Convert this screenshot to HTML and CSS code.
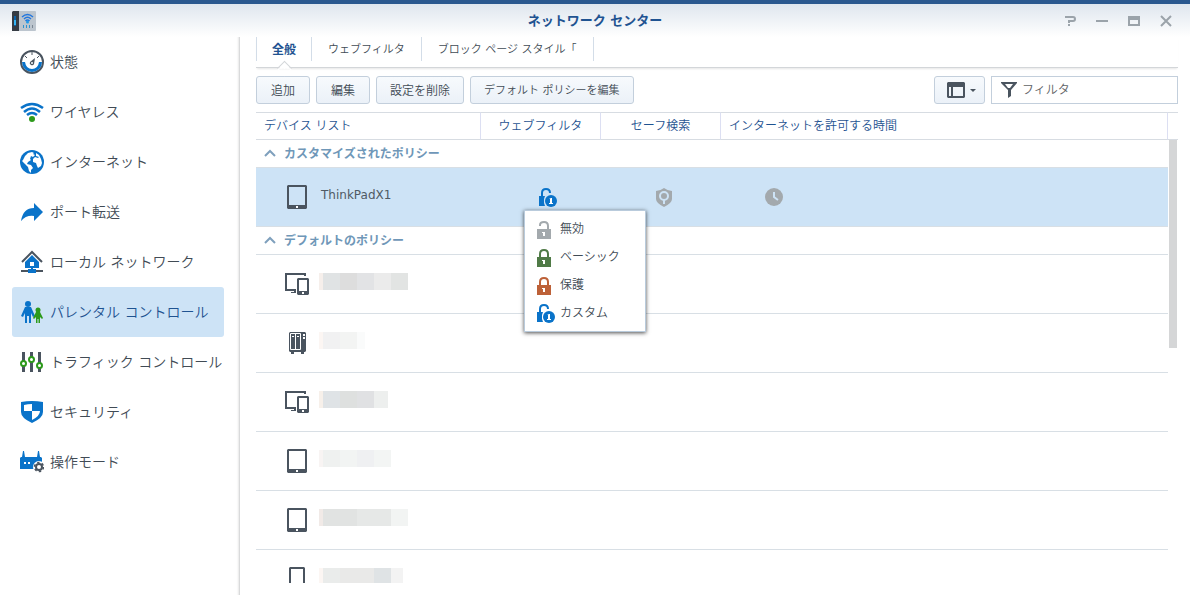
FILE: index.html
```html
<!DOCTYPE html>
<html lang="ja">
<head>
  <meta charset="UTF-8">
  <meta name="viewport" content="width=device-width, initial-scale=1.0">
  <title>ネットワーク センター</title>
  <link rel="stylesheet" href="styles.css">
</head>
<body>

  <!-- Shared icons -->
  <svg class="sprite" aria-hidden="true">
    <symbol id="tablet" viewBox="0 0 26 26">
      <path fill="#4a545f" fill-rule="evenodd" d="M4 1h18l1 1v22l-1 1H4l-1-1V2zM5 3v18h16V3z"/>
      <path fill="#fff" d="M12 22h2v2h-2z"/>
    </symbol>
    <symbol id="devices" viewBox="0 0 26 26">
      <path fill="#4a545f" d="M1 2h21v3h-2V4H3v14h9v4H7v-1h3v-1H1z"/>
      <path fill="#4a545f" fill-rule="evenodd" d="M14 7h10l1 1v15l-1 1H14l-1-1V8zM15 9v11h8V9z"/>
      <path fill="#fff" d="M18 21h2v2h-2z"/>
    </symbol>
    <symbol id="nas" viewBox="0 0 26 26">
      <path fill="#4a545f" d="M6 2h15l1 1v18l-1 1h-1v2h-3v-2h-7v2H7v-2H6l-1-1V3z"/>
      <path fill="none" stroke="#fff" d="M6.500 3.500h10v16h-10zM11.500 3.500v16"/>
      <path fill="#fff" d="M8 6h2v1H8zM13 6h2v1h-2zM19 4h2v2h-2zM19 7h2v2h-2z"/>
    </symbol>
    <symbol id="lock-open" viewBox="0 0 20 20">
      <path fill="none" stroke="currentColor" stroke-width="2" d="M4 7V6Q4 3 8 3t4 4v4"/>
      <path fill="currentColor" d="M1 10h14v10H1z"/>
      <path fill="#fff" d="M6 13h3v4H7v-3H6z"/>
    </symbol>
    <symbol id="lock-closed" viewBox="0 0 20 20">
      <path fill="none" stroke="currentColor" stroke-width="2" d="M4 11V7Q4 3 8 3t4 4v4"/>
      <path fill="currentColor" d="M1 10h14v10H1z"/>
      <path fill="#fff" d="M6 13h3v4H7v-3H6z"/>
    </symbol>
    <symbol id="lock-custom" viewBox="0 0 20 20">
      <path fill="none" stroke="currentColor" stroke-width="2" d="M4 10V6Q4 2 8 2t4 4"/>
      <path fill="currentColor" d="M1 9h6l-1 3v4l1 3H1z"/>
      <circle cx="13" cy="14" r="6" fill="currentColor"/>
      <path fill="#fff" d="M11 12l2-1h1v5h1v1h-4v-1h1v-4h-1z"/>
    </symbol>
    <symbol id="chevron" viewBox="0 0 12 8">
      <path fill="none" stroke="#7fa0bd" stroke-width="2" d="M1 7l5-5 5 5"/>
    </symbol>
  </svg>

  <!-- Title bar -->
  <header class="titlebar">
    <svg class="app-icon" viewBox="0 0 24 20" aria-hidden="true">
      <rect x="1" width="23" height="20" rx="1" fill="#bcc5ce"/>
      <path fill="#363c44" d="M0 1l1-1h6v20H0z"/>
      <path fill="#0b62a8" d="M2 5h2v10H2z"/>
      <path fill="#35b5f4" d="M2 9h2v5H2z"/>
      <g fill="none" stroke="#2377de" stroke-width="1.500">
        <path d="M10 6q5.500-5 11 0M12 8q3.500-3.500 7 0M13.500 10q2-2 4 0"/>
      </g>
      <circle cx="15.500" cy="11" r="1.500" fill="#1f9be8"/>
      <path fill="#2f93cf" d="M11 14h1v3h-1zM14 14h1v3h-1zM17 14h1v3h-1z"/>
      <path fill="#7a8794" d="M20 14h1v3h-1z"/>
    </svg>
    <h1>ネットワーク センター</h1>
    <div class="window-buttons">
      <button type="button" aria-label="ヘルプ"><svg viewBox="0 0 12 12"><path fill="none" stroke="#9ba3aa" stroke-width="2" d="M1 2h8q2 0 2 2t-2 2H5v2M4 10h2"/></svg></button>
      <button type="button" aria-label="最小化"><svg viewBox="0 0 12 12"><path fill="#9ba3aa" d="M0 5h12v2H0z"/></svg></button>
      <button type="button" aria-label="最大化"><svg viewBox="0 0 12 12"><path fill="#9ba3aa" fill-rule="evenodd" d="M0 1h12v10H0zM2 5v4h8V5z"/></svg></button>
      <button type="button" aria-label="閉じる"><svg viewBox="0 0 12 12"><path fill="none" stroke="#9ba3aa" stroke-width="2" d="M1 1l10 10M11 1L1 11"/></svg></button>
    </div>
  </header>

  <div class="window">

    <!-- Sidebar -->
    <nav class="sidebar">
      <a href="#status">
        <svg viewBox="0 0 24 24"><circle cx="12" cy="12" r="11" fill="#fff" stroke="#4a545f" stroke-width="2"/><path fill="#0a73c9" d="M2 12h3q1 7 7 7t7-7h3a10 10 0 0 1-20 0z"/><path stroke="#4a545f" d="M12 2v3M5 6l2 2M19 6l-2 2"/><path fill="#4a545f" d="M15 8l-1 6a2 2 0 1 1-4-2z"/><circle cx="12" cy="13" r="1" fill="#fff"/></svg>
        状態
      </a>
      <a href="#wireless">
        <svg viewBox="0 0 24 24"><g fill="none" stroke="#0a73c9" stroke-width="2.500"><path d="M1 8q11-8 22 0M4 12q8-7 16 0M7 15q5-4 10 0"/></g><circle cx="12" cy="19" r="3" fill="#2d9a1b"/></svg>
        ワイヤレス
      </a>
      <a href="#internet">
        <svg viewBox="0 0 24 24"><circle cx="12" cy="12" r="12" fill="#0a73c9"/><path fill="#fff" d="M5 6l3-3 4-1 2 1-1 1 2 1-2 2-2-1-1 3 1 1-3 2-1 2 4 1 2 3-2 2v3l-2-2-1-4-3-3-3-3 1-1zM16 3l3 2 2 4 1 4-1 3-3 2-1-2-1-3-3-1v-3l2-2 3 1 1-1-3-1z"/></svg>
        インターネット
      </a>
      <a href="#port">
        <svg viewBox="0 0 24 24"><path fill="#0a73c9" d="M1 21Q3 8 14 8V3l9 9-9 9v-5Q6 15 1 21z"/></svg>
        ポート転送
      </a>
      <a href="#lan">
        <svg viewBox="0 0 24 24"><path fill="none" stroke="#4a545f" stroke-width="2" d="M2 12L12 2l10 10"/><path fill="#0a73c9" fill-rule="evenodd" d="M12 5l7 7v6h-6v1h3v4H8v-4h3v-1H5v-6zM10 12v4h4v-4z"/><path fill="#4a545f" d="M1 20h7v2H1zM16 20h7v2h-7z"/></svg>
        ローカル ネットワーク
      </a>
      <a href="#parental" class="active">
        <svg viewBox="0 0 24 24"><circle cx="8" cy="4" r="3" fill="#0a73c9"/><path fill="#0a73c9" d="M5 7h6l4 9-2 1-2-4v10H9v-7H7v7H5V13l-2 4-2-1z"/><circle cx="18" cy="10" r="2.500" fill="#2d9a1b"/><path fill="#2d9a1b" d="M16 12h4l3 6-1 1-2-2v6h-1.500v-4h-1v4H16v-6l-2 2-1-1z"/></svg>
        パレンタル コントロール
      </a>
      <a href="#traffic">
        <svg viewBox="0 0 24 24"><path stroke="#4a545f" stroke-width="3" d="M3.500 2v20M11.500 2v20M19.500 2v20"/><g fill="#fff" stroke="#2d9a1b" stroke-width="2"><circle cx="3.500" cy="13.500" r="2.500"/><circle cx="11.500" cy="9.500" r="2.500"/><circle cx="19.500" cy="15.500" r="2.500"/></g></svg>
        トラフィック コントロール
      </a>
      <a href="#security">
        <svg viewBox="0 0 24 24"><path fill="#0a73c9" d="M1 2q11-2 22 0v10q0 6-11 11Q1 18 1 12z"/><path fill="#fff" d="M12 4v7H4V5q4-1 8-1zM12 11h8q0 5-8 9z"/></svg>
        セキュリティ
      </a>
      <a href="#mode">
        <svg viewBox="0 0 24 24"><path fill="#0a73c9" d="M3 1h1l1 6h12l1-6h1l1 6h1l1 1v11H0V8l1-1h1z"/><path fill="#fff" d="M4 12h2v2H4zM8 12h2v2H8z"/><circle cx="19" cy="17" r="6" fill="#fff"/><circle cx="19" cy="17" r="3" fill="none" stroke="#4a545f" stroke-width="2"/><circle cx="19" cy="17" r="4.500" fill="none" stroke="#4a545f" stroke-width="1.500" stroke-dasharray="2.400 2.300"/></svg>
        操作モード
      </a>
    </nav>

    <main>
      <!-- Tabs -->
      <div class="tabs" role="tablist">
        <button type="button" role="tab" class="active" aria-selected="true">全般</button>
        <button type="button" role="tab">ウェブフィルタ</button>
        <button type="button" role="tab">ブロック ページ スタイル「</button>
      </div>

      <!-- Toolbar -->
      <div class="toolbar">
        <button type="button" class="btn">追加</button>
        <button type="button" class="btn">編集</button>
        <button type="button" class="btn">設定を削除</button>
        <button type="button" class="btn btn-long">デフォルト ポリシーを編集</button>
        <button type="button" class="btn btn-view" aria-label="表示">
          <svg width="18" height="16" viewBox="0 0 18 16"><path fill="#4a545f" fill-rule="evenodd" d="M1 0h16l1 1v14l-1 1H1l-1-1V1zM2 5v9h2V5zM6 5v9h10V5z"/></svg>
          <svg width="6" height="3" viewBox="0 0 6 3"><path fill="#4a545f" d="M0 0h6L3 3z"/></svg>
        </button>
        <label class="filter">
          <svg width="16" height="16" viewBox="0 0 16 16"><path fill="#4a545f" fill-rule="evenodd" d="M0 0h16v1l-6 7v6l-3 2V8L0 1zM4 2l3 4h2l3-4z"/></svg>
          <input type="text" placeholder="フィルタ" aria-label="フィルタ">
        </label>
      </div>

      <!-- Device list -->
      <div class="list">
        <table>
          <colgroup><col class="col-device"><col class="col-icon"><col class="col-icon"><col><col class="col-scroll"></colgroup>
          <thead>
            <tr><th>デバイス リスト</th><th class="center">ウェブフィルタ</th><th class="center">セーフ検索</th><th>インターネットを許可する時間</th><th></th></tr>
          </thead>
          <tbody>
            <tr class="group"><th colspan="4"><svg><use href="#chevron"/></svg>カスタマイズされたポリシー</th><td></td></tr>
            <tr class="selected">
              <td><div class="device"><svg><use href="#tablet"/></svg><span>ThinkPadX1</span></div></td>
              <td>
                <div class="policy">
                  <button type="button" class="policy-btn custom" aria-label="カスタム"><svg><use href="#lock-custom"/></svg></button>
                  <div class="menu" role="menu">
                    <button type="button" role="menuitem"><svg class="none"><use href="#lock-open"/></svg>無効</button>
                    <button type="button" role="menuitem"><svg class="basic"><use href="#lock-closed"/></svg>ベーシック</button>
                    <button type="button" role="menuitem"><svg class="protect"><use href="#lock-closed"/></svg>保護</button>
                    <button type="button" role="menuitem"><svg class="custom"><use href="#lock-custom"/></svg>カスタム</button>
                  </div>
                </div>
              </td>
              <td class="safe"><svg viewBox="0 0 20 20"><path fill="#a3a9ad" d="M10 1q4 3 8 3v8q0 4-8 8-8-4-8-8V4q4 0 8-3z"/><circle cx="10" cy="9" r="4" fill="none" stroke="#cde3f6" stroke-width="2"/><path fill="#cde3f6" d="M9 13h2v4H9z"/></svg></td>
              <td class="time"><svg viewBox="0 0 20 20"><circle cx="10" cy="10" r="9" fill="#a3a9ad"/><path fill="none" stroke="#cde3f6" stroke-width="2" d="M10 5v5l4 3"/></svg></td>
              <td></td>
            </tr>
            <tr class="group"><th colspan="4"><svg><use href="#chevron"/></svg>デフォルトのポリシー</th><td></td></tr>
            <tr><td colspan="4"><div class="device"><svg><use href="#devices"/></svg><i class="mosaic m1"></i></div></td><td></td></tr>
            <tr><td colspan="4"><div class="device"><svg><use href="#nas"/></svg><i class="mosaic m2"></i></div></td><td></td></tr>
            <tr><td colspan="4"><div class="device"><svg><use href="#devices"/></svg><i class="mosaic m3"></i></div></td><td></td></tr>
            <tr><td colspan="4"><div class="device"><svg><use href="#tablet"/></svg><i class="mosaic m4"></i></div></td><td></td></tr>
            <tr><td colspan="4"><div class="device"><svg><use href="#tablet"/></svg><i class="mosaic m5"></i></div></td><td></td></tr>
            <tr><td colspan="4"><div class="device"><svg viewBox="0 0 26 26"><path fill="#4a545f" fill-rule="evenodd" d="M6 1h14l1 1v23H5V2zM7 3v20h12V3z"/></svg><i class="mosaic m6"></i></div></td><td></td></tr>
          </tbody>
        </table>
        <div class="scrollbar"></div>
      </div>
    </main>
  </div>

</body>
</html>
```

FILE: styles.css
```css
* { margin: 0; padding: 0; box-sizing: border-box; }

body {
  height: 100vh;
  display: flex;
  flex-direction: column;
  overflow: hidden;
  background: #fff;
  color: #414b55;
  font: 350 12px/20px "DejaVu Sans", "Noto Sans CJK JP", sans-serif;
}

button, input {
  font: inherit;
  color: inherit;
  background: none;
  border: none;
}

button { cursor: pointer; }
svg { display: block; flex: none; }
.sprite { position: absolute; width: 0; height: 0; }

/* Title bar */
.titlebar {
  height: 37px;
  flex: none;
  display: grid;
  grid-template-columns: 1fr auto 1fr;
  align-items: center;
  padding: 0 12px;
  border-top: 4px solid #2a588f;
  background: linear-gradient(#dfe6ee, #fff);
}

.titlebar h1 {
  font-size: 13px;
  color: #1f5391;
}

.app-icon { width: 24px; height: 20px; }

.window-buttons {
  display: flex;
  justify-content: flex-end;
  gap: 20px;
  padding-right: 6px;
}

.window-buttons svg { width: 12px; height: 12px; }

.window {
  flex: 1;
  min-height: 0;
  display: flex;
}

/* Sidebar */
.sidebar {
  width: 240px;
  flex: none;
  padding-left: 12px;
  padding-right: 15px;
  border-right: 1px solid #d9dadb;
  box-shadow: inset -3px 0 2px -2px #e8e8e8;
}

.sidebar a {
  height: 50px;
  display: flex;
  align-items: center;
  gap: 6px;
  padding-left: 8px;
  border-radius: 3px;
  font-size: 14px;
  color: #414b55;
  text-decoration: none;
  white-space: nowrap;
}

.sidebar a.active {
  background: #cde3f6;
  color: #1f5391;
}

.sidebar svg { width: 24px; height: 24px; }

/* Main area */
main {
  flex: 1;
  min-width: 0;
  display: flex;
  flex-direction: column;
  padding: 0 12px 12px 16px;
}

.tabs {
  height: 31px;
  flex: none;
  display: flex;
  align-items: flex-start;
  border-bottom: 1px solid #d3d6d9;
  box-shadow: 0 2px 2px -1px #e6e6e6;
}

.tabs button {
  position: relative;
  height: 24px;
  padding: 1px 16px 0;
  border-right: 1px solid #d3dde8;
  font-size: 11px;
}

.tabs button.active {
  padding: 1px 15px 0;
  border-left: 1px solid #d3dde8;
  font-size: 12px;
  font-weight: bold;
  color: #1f5391;
}

.tabs button.active::after {
  content: "";
  position: absolute;
  left: 50%;
  top: 26px;
  width: 9px;
  height: 9px;
  margin-left: -5px;
  transform: rotate(45deg);
  border: 1px solid #d3d6d9;
  border-right-color: transparent;
  border-bottom-color: transparent;
  background: linear-gradient(135deg, #fff 50%, transparent 50%);
}

.toolbar {
  flex: none;
  display: flex;
  gap: 6px;
  margin: 8px 0;
}

.btn {
  height: 28px;
  min-width: 51px;
  padding: 1px 13px 0;
  border: 1px solid #c3cfdc;
  border-radius: 3px;
  background: linear-gradient(#f7fafd, #ebf1f8);
}

.btn:not(.btn-view) { min-width: 54px; }
.btn-long { font-size: 11px; }

.btn-view {
  display: flex;
  align-items: center;
  gap: 5px;
  padding: 0 8px 0 12px;
  margin-left: auto;
}

.filter {
  width: 187px;
  height: 28px;
  display: flex;
  align-items: center;
  gap: 5px;
  padding: 0 9px;
  border: 1px solid #c3cfdc;
}

.filter input { flex: 1; min-width: 0; outline: none; }
.filter input::placeholder { color: #5f6366; }

/* Device list */
.list {
  position: relative;
  flex: 1;
  min-height: 0;
  overflow: hidden;
}

table {
  width: 100%;
  table-layout: fixed;
  border-collapse: separate;
  border-spacing: 0;
}

.col-device { width: 225px; }
.col-icon { width: 120px; }
.col-scroll { width: 10px; }

thead th {
  height: 28px;
  padding: 0 8px;
  border: solid #d7dce2;
  border-width: 1px 1px 1px 0;
  border-right-color: #dcdff2;
  font-weight: 350;
  text-align: left;
  white-space: nowrap;
  color: #1f5391;
}

thead th:last-child { border-right: none; padding: 0; }
thead th.center { text-align: center; }

tbody td, tbody th { border-bottom: 1px solid #d8dfe5; }
tbody td:last-child { border-bottom: none; }
tbody td { height: 59px; }

.group th, .group td { height: 28px; }

.group th {
  padding-left: 8px;
  text-align: left;
  color: #6f97b8;
}

.group svg {
  display: inline-block;
  width: 12px;
  height: 8px;
  margin-right: 8px;
  vertical-align: 1px;
}

.selected td:not(:last-child) { background: #cde3f6; }

.device {
  display: flex;
  align-items: center;
  padding-left: 28px;
}

.device svg { width: 26px; height: 26px; }

.device span {
  margin: 0 0 4px 11px;
  font-weight: normal;
  color: #505a64;
}

.mosaic {
  height: 17px;
  margin: 0 0 5px 9px;
}

.m1 { width: 89px; background: linear-gradient(90deg, #f6efeb 4px, #e0e3e4 4px 21px, #dddddd 21px 38px, #e2e3e5 38px 55px, #ebebeb 55px 72px, #e2e4e3 72px); }
.m2 { width: 46px; background: linear-gradient(90deg, #fcf6f3 4px, #f1f1f2 4px 21px, #f3f4f3 21px 38px, #fafbfb 38px); }
.m3 { width: 69px; background: linear-gradient(90deg, #f7f0ea 4px, #dfe3e6 4px 21px, #dee0df 21px 38px, #e0e1e3 38px 55px, #edefee 55px); }
.m4 { width: 72px; background: linear-gradient(90deg, #f8f4f3 4px, #eff1f0 4px 21px, #f2f4f3 21px 38px, #eff0f2 38px 55px, #f3f5f4 55px); }
.m5 { width: 89px; background: linear-gradient(90deg, #f1eae7 4px, #e1e3e2 4px 38px, #e6e8e7 38px 72px, #f2f4f3 72px); }
.m6 { width: 84px; background: linear-gradient(90deg, #fcf6f3 4px, #eaeceb 4px 21px, #e9e9e8 21px 55px, #dfe3e5 55px 72px, #f3f3f3 72px); }

.safe { padding-left: 53px; }
.time { padding-left: 43px; }
.safe svg, .time svg { width: 20px; height: 20px; }

.custom { color: #0a73c9; }
.none { color: #a3a9ad; }
.basic { color: #4f7a46; }
.protect { color: #bd6138; }

/* Policy menu */
.policy { position: relative; padding-left: 57px; }
.policy-btn { display: block; }
.policy svg { width: 20px; height: 20px; }

.menu {
  position: absolute;
  left: 43px;
  top: 23px;
  z-index: 1;
  width: 122px;
  padding: 4px 0;
  border: 1px solid #b9cbdc;
  background: #fff;
  box-shadow: 0 1px 4px rgba(0, 0, 0, 0.7);
}

.menu button {
  width: 100%;
  height: 28px;
  display: flex;
  align-items: center;
  gap: 4px;
  padding-left: 11px;
}

.scrollbar {
  position: absolute;
  top: 28px;
  right: 1px;
  width: 8px;
  height: 208px;
  background: #d5d6d7;
}
```
